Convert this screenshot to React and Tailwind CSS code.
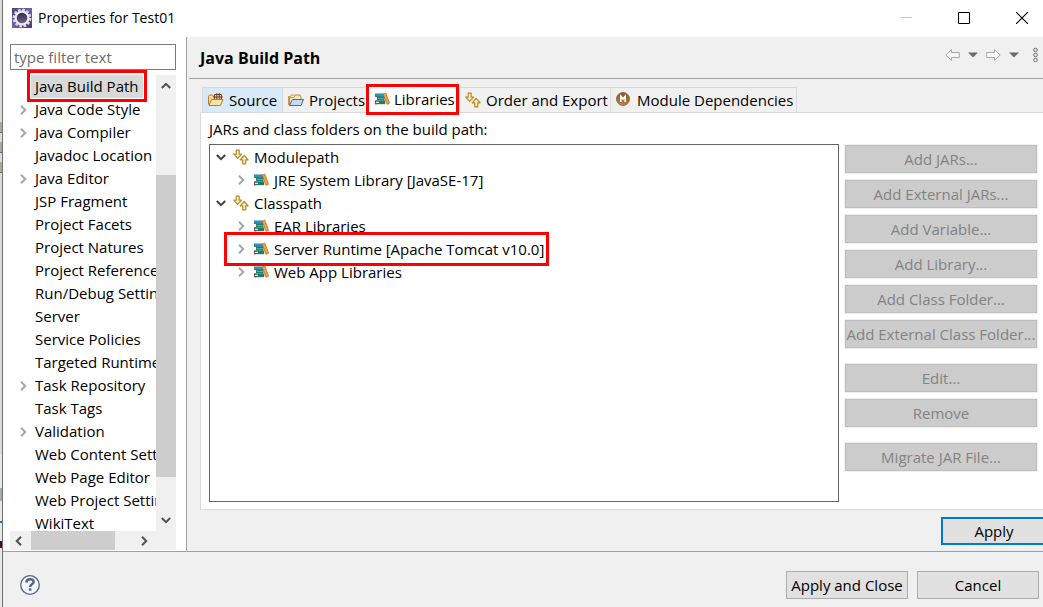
import React from "react";

const pages = [
  { label: "Java Build Path", selected: true },
  { label: "Java Code Style", children: true },
  { label: "Java Compiler", children: true },
  { label: "Javadoc Location" },
  { label: "Java Editor", children: true },
  { label: "JSP Fragment" },
  { label: "Project Facets" },
  { label: "Project Natures" },
  { label: "Project References" },
  { label: "Run/Debug Settings" },
  { label: "Server" },
  { label: "Service Policies" },
  { label: "Targeted Runtimes" },
  { label: "Task Repository", children: true },
  { label: "Task Tags" },
  { label: "Validation", children: true },
  { label: "Web Content Settings" },
  { label: "Web Page Editor" },
  { label: "Web Project Settings" },
  { label: "WikiText" },
];

const buildPath = [
  { label: "Modulepath", items: ["JRE System Library [JavaSE-17]"] },
  {
    label: "Classpath",
    items: [
      "EAR Libraries",
      "Server Runtime [Apache Tomcat v10.0]",
      "Web App Libraries",
    ],
  },
];

const actionGroups = [
  [
    "Add JARs...",
    "Add External JARs...",
    "Add Variable...",
    "Add Library...",
    "Add Class Folder...",
    "Add External Class Folder...",
  ],
  ["Edit...", "Remove"],
  ["Migrate JAR File..."],
];

const chevrons = {
  right: "M3 .8L7.2 5 3 9.2",
  left: "M7 .8L2.8 5 7 9.2",
  up: "M.8 7L5 2.8 9.2 7",
  down: "M.8 3L5 7.2 9.2 3",
};

const Chevron = ({ dir, className }) => (
  <svg
    className={className}
    viewBox="0 0 10 10"
    fill="none"
    stroke="currentColor"
    strokeWidth="2"
  >
    <path d={chevrons[dir]} />
  </svg>
);

const EclipseIcon = () => (
  <svg className="size-5 shrink-0" viewBox="0 0 20 20">
    <defs>
      <linearGradient id="eclipse-bg" x1="0" y1="0" x2="1" y2="1">
        <stop offset="0" stopColor="#51447c" />
        <stop offset="0.5" stopColor="#6f63a0" />
        <stop offset="1" stopColor="#473a78" />
      </linearGradient>
      <linearGradient id="eclipse-moon" x1="0" y1="0" x2="0" y2="1">
        <stop offset="0" stopColor="#2c2647" />
        <stop offset="1" stopColor="#6f6a8c" />
      </linearGradient>
    </defs>
    <path d="M0 0h20v20H0z" fill="url(#eclipse-bg)" />
    <circle
      cx="10"
      cy="10"
      r="8.2"
      fill="none"
      stroke="#dedbe4"
      strokeWidth="2.4"
      strokeDasharray="2.6 1.69"
    />
    <circle cx="10" cy="10" r="6.4" fill="url(#eclipse-moon)" stroke="#efedf2" strokeWidth="2.2" />
  </svg>
);

const SourceIcon = () => (
  <svg className="size-4 shrink-0" viewBox="0 0 16 16" strokeLinejoin="round">
    <path d="M.5 12.5V4.5l1-1.5h3l1 1.5h6V7" fill="#f5d996" stroke="#b37a2c" />
    <path d="M6.5 2.5h7v5h-7z" fill="#e9c9a0" stroke="#75462b" />
    <path d="M8.8 1v6.5M11.3 1v6.5M5 5h10" stroke="#75462b" fill="none" />
    <path d="M1 13.5l2.5-6h11.5l-2.5 6z" fill="#fbe3a5" stroke="#b97a24" />
  </svg>
);

const ProjectsIcon = () => (
  <svg className="size-4 shrink-0" viewBox="0 0 16 16" strokeLinejoin="round">
    <path d="M.5 13V4.5h2L3.5 3h3" fill="none" stroke="#c79744" />
    <path d="M1.5 13V5.5h4.5l1-2.5h5l1 2v3" fill="#fae8b8" stroke="#c18f3a" />
    <path d="M1.5 13.5l2.8-6h11.2l-2.5 6z" fill="#c3dbf7" stroke="#3c68b5" />
  </svg>
);

const LibraryIcon = () => (
  <svg className="size-4 shrink-0" viewBox="0 0 16 16">
    <path d="M1 2.5h9V6H1z" fill="#2583ad" />
    <path d="M2 3.6h7v.8H2z" fill="#4fa3c6" />
    <path d="M3 6h7.5v3.5H3z" fill="#208068" />
    <path d="M3.8 7h6.2v1H3.8z" fill="#52b394" />
    <path d="M1 9.5h10.2v3.7H1z" fill="#22776a" />
    <path d="M1 9.5h2v3.7H1z" fill="#8a4a31" />
    <path d="M2 10.8h3v1.2H2z" fill="#e4ebe3" />
    <path d="M9.3 3.2l2.5-1.2 3.8 10.3-2.6 1z" fill="#f2a444" stroke="#c06c24" strokeWidth=".8" />
  </svg>
);

const OrderIcon = () => (
  <svg
    className="size-4 shrink-0"
    viewBox="0 0 16 16"
    fill="#fdeeb8"
    stroke="#b98a2b"
    strokeWidth="1.2"
    strokeLinejoin="round"
  >
    <path d="M3.2 1.2h3v4h2.4L4.7 9.4.8 5.2h2.4z" />
    <path d="M9.7 14.8h3v-4h2.5l-4-4.3-4 4.3h2.5z" />
  </svg>
);

const ModuleIcon = () => (
  <svg className="size-4 shrink-0" viewBox="0 0 16 16">
    <defs>
      <linearGradient id="module-disc" x1="0" y1="0" x2="0" y2="1">
        <stop offset="0" stopColor="#7d5a33" />
        <stop offset="1" stopColor="#bd8347" />
      </linearGradient>
    </defs>
    <circle cx="7" cy="7" r="6.5" fill="url(#module-disc)" stroke="#8a5a2b" strokeWidth=".8" />
    <path d="M4.8 10V4.2l2.2 2.8 2.2-2.8V10" fill="none" stroke="#fff" strokeWidth="1.6" />
  </svg>
);

const HelpIcon = () => (
  <svg className="size-5" viewBox="0 0 20 20" fill="none" stroke="#526385">
    <circle cx="10" cy="10" r="9.3" fill="#f7f8fa" strokeWidth="1.3" />
    <path d="M6.4 7.4c0-4.2 7.2-4.2 7.2-.5 0 2.4-3.5 2.3-3.5 5" strokeWidth="2.4" />
    <path d="M10.1 13.3v2.5" strokeWidth="2.6" />
  </svg>
);

const tabs = [
  { label: "Source", icon: <SourceIcon />, style: "w-20 bg-[#d8e9f7]" },
  { label: "Projects", icon: <ProjectsIcon />, style: "w-[84px]" },
  { label: "Libraries", icon: <LibraryIcon />, active: true },
  { label: "Order and Export", icon: <OrderIcon />, style: "w-[151px]" },
  { label: "Module Dependencies", icon: <ModuleIcon />, style: "w-[187px] border-r" },
];

const TitleBar = () => (
  <header className="flex h-[37px] shrink-0 items-center bg-white pb-[1px] pl-[9px]">
    <EclipseIcon />
    <h1 className="ml-[6px] flex-1 text-sm">Properties for Test01</h1>
    <div className="flex items-center gap-[46px] pr-[15px]">
      <button aria-label="Minimize">
        <svg className="size-3" viewBox="0 0 12 12" stroke="#c8c8c8">
          <path d="M0 5.5h12" />
        </svg>
      </button>
      <button aria-label="Maximize">
        <svg className="size-3" viewBox="0 0 12 12" fill="none" stroke="#000">
          <path d="M.5.5h11v11H.5z" />
        </svg>
      </button>
      <button aria-label="Close">
        <svg className="size-3" viewBox="0 0 12 12" stroke="#000" strokeWidth="1.1">
          <path d="M0 0l12 12M12 0L0 12" />
        </svg>
      </button>
    </div>
  </header>
);

const Sidebar = () => (
  <nav className="flex w-[184px] shrink-0 flex-col border-r border-[#a0a0a0] bg-white pt-[7px] pr-[10px] pb-[1px] pl-[7px]">
    <input
      type="text"
      aria-label="Filter pages"
      placeholder="type filter text"
      className="h-[26px] w-full shrink-0 border border-[#7a7a7a] px-[3px] placeholder:text-[#6d6d6d]"
    />
    <div className="relative mt-[5px] flex min-h-0 flex-1">
      <ul className="min-w-0 flex-1 overflow-hidden">
        {pages.map((page) => (
          <li key={page.label} className="flex h-[23px] items-center pl-[8px]">
            <span className="flex w-[13px] shrink-0 items-center text-[#a6a6a6]">
              {page.children && (
                <button aria-label={`Expand ${page.label}`}>
                  <Chevron dir="right" className="size-[10px]" />
                </button>
              )}
            </span>
            <a
              href="#"
              className={`px-1 leading-[23px] whitespace-nowrap ${page.selected ? "bg-[#d9d9d9]" : ""}`}
            >
              {page.label}
            </a>
          </li>
        ))}
      </ul>
      <div className="flex w-5 shrink-0 flex-col items-center bg-[#f0f0f0] py-[6px] text-[#505050]">
        <button aria-label="Scroll up">
          <Chevron dir="up" className="size-[10px]" />
        </button>
        <div className="flex w-full flex-1 flex-col pt-[84px] pb-[38px]">
          <div className="w-full flex-1 bg-[#cdcdcd]" />
        </div>
        <button aria-label="Scroll down">
          <Chevron dir="down" className="size-[10px]" />
        </button>
      </div>
      <div className="pointer-events-none absolute -top-[5px] left-[17px] h-8 w-[120px] border-3 border-[#ff0000]" />
    </div>
    <div className="flex h-[19px] shrink-0 items-center bg-[#f0f0f0] pr-[27px] pl-[4px] text-[#505050]">
      <button aria-label="Scroll left">
        <Chevron dir="left" className="size-[10px]" />
      </button>
      <div className="mr-[24px] ml-[7px] h-full flex-1 bg-[#cdcdcd]" />
      <button aria-label="Scroll right">
        <Chevron dir="right" className="size-[10px]" />
      </button>
    </div>
  </nav>
);

const HistoryArrow = ({ flip }) => (
  <svg
    className={`h-3 w-[15px] ${flip ? "-scale-x-100" : ""}`}
    viewBox="0 0 15 12"
    fill="#f8f8f8"
    stroke="#a9a9a9"
    strokeLinejoin="round"
  >
    <path d="M.8 6L6.5.6v2.9h7.8v5H6.5v2.9z" />
  </svg>
);

const Caret = () => (
  <svg className="h-[6px] w-[10px]" viewBox="0 0 10 6" fill="#6b6b70">
    <path d="M0 .5h10l-5 5z" />
  </svg>
);

const PageHeader = () => (
  <div className="ml-[2px] flex h-[42px] shrink-0 items-center border-b border-[#a0a0a0] pl-[11px]">
    <h2 className="flex-1 text-base font-bold">Java Build Path</h2>
    <div className="flex items-center gap-2 pr-[5px] pb-[6px]">
      <button aria-label="Back">
        <HistoryArrow />
      </button>
      <button aria-label="Back history">
        <Caret />
      </button>
      <button aria-label="Forward">
        <HistoryArrow flip />
      </button>
      <button aria-label="Forward history">
        <Caret />
      </button>
      <button aria-label="View menu" className="ml-[6px]">
        <svg className="h-4 w-[5px]" viewBox="0 0 5 16" fill="none" stroke="#6b6b6b">
          <circle cx="2.5" cy="3" r="1.8" />
          <circle cx="2.5" cy="8" r="1.8" />
          <circle cx="2.5" cy="13" r="1.8" />
        </svg>
      </button>
    </div>
  </div>
);

const Tabs = () => (
  <div role="tablist" className="flex h-[33px] shrink-0 items-end pl-[2px]">
    {tabs.map(({ label, icon, active, style }) =>
      active ? (
        <button
          key={label}
          role="tab"
          aria-selected="true"
          className="relative z-10 -mb-[3px] flex h-[31px] w-[93px] items-center gap-1 border-3 border-[#ff0000] bg-white pb-[2px] pl-[5px] whitespace-nowrap"
        >
          {icon}
          {label}
        </button>
      ) : (
        <button
          key={label}
          role="tab"
          aria-selected="false"
          className={`flex h-[25px] items-center gap-[5px] border-t border-l border-[#d9d9d9] pl-[5px] whitespace-nowrap ${style}`}
        >
          {icon}
          {label}
        </button>
      )
    )}
  </div>
);

const LibraryTree = () => (
  <ul className="min-w-0 flex-1 border border-[#646464] bg-white">
    {buildPath.map((node) => (
      <li key={node.label}>
        <div className="flex h-[23px] items-center pl-[6px]">
          <button aria-label={`Collapse ${node.label}`} className="mr-[7px] text-[#404040]">
            <Chevron dir="down" className="size-[10px]" />
          </button>
          <OrderIcon />
          <span className="ml-[5px] leading-[22px]">{node.label}</span>
        </div>
        <ul>
          {node.items.map((item) => (
            <li key={item} className="relative flex h-[23px] items-center pl-[26px]">
              <button aria-label={`Expand ${item}`} className="mr-[7px] text-[#a6a6a6]">
                <Chevron dir="right" className="size-[10px]" />
              </button>
              <LibraryIcon />
              <span className="ml-[5px] leading-[22px] whitespace-nowrap">{item}</span>
              {item.startsWith("Server Runtime") && (
                <div className="pointer-events-none absolute -top-[5px] left-[14px] z-10 h-[34px] w-[325px] border-3 border-[#ff0000]" />
              )}
            </li>
          ))}
        </ul>
      </li>
    ))}
  </ul>
);

const Actions = () => (
  <div className="flex w-[192px] shrink-0 flex-col gap-4 pt-[1px]">
    {actionGroups.map((group) => (
      <div key={group[0]} className="flex flex-col gap-[7px]">
        {group.map((label) => (
          <button
            key={label}
            disabled
            className="h-7 w-full border border-[#bfbfbf] bg-[#cccccc] whitespace-nowrap text-[#838383] ring-1 ring-[#f0f0f0]"
          >
            <span className="flex justify-center">{label}</span>
          </button>
        ))}
      </div>
    ))}
  </div>
);

const BuildPathPage = () => (
  <main className="flex min-w-0 flex-1 flex-col overflow-hidden">
    <PageHeader />
    <div className="flex min-h-0 flex-1 flex-col pb-[6px] pl-[13px]">
      <Tabs />
      <section className="flex min-h-0 flex-1 flex-col border-y border-l border-[#d9d9d9] bg-white pt-[5px] pr-[6px] pb-[7px] pl-2">
        <h3 className="mb-[2px] h-6 leading-[23px]">JARs and class folders on the build path:</h3>
        <div className="flex min-h-0 flex-1 gap-[6px]">
          <LibraryTree />
          <Actions />
        </div>
      </section>
      <div className="flex shrink-0 justify-end pt-[7px]">
        <button className="-mr-1 h-7 w-[106px] border-2 border-[#0078d7] bg-[#e1e1e1]">Apply</button>
      </div>
    </div>
  </main>
);

const Footer = () => (
  <footer className="flex h-14 shrink-0 items-center border-t border-[#a0a0a0] pt-3 pr-1 pb-[1px] pl-[17px]">
    <button aria-label="Help">
      <HelpIcon />
    </button>
    <div className="ml-auto flex gap-[9px]">
      <button className="h-7 w-[122px] border border-[#adadad] bg-[#e1e1e1] whitespace-nowrap">
        Apply and Close
      </button>
      <button className="h-7 w-[122px] border border-[#adadad] bg-[#e1e1e1]">Cancel</button>
    </div>
  </footer>
);

// Sliver of the editor window that shows past the dialog's left edge
const EditorEdge = () => (
  <svg className="w-[2px] shrink-0 bg-[#dcdcdc]" viewBox="0 0 2 607" preserveAspectRatio="xMinYMin slice">
    <path d="M0 455h2v152H0z" fill="#e8e8e8" />
    <path d="M0 122h2v10H0zM0 142h2v10H0zM0 162h2v10H0z" fill="#b7a58e" />
    <path d="M0 132h2v1H0zM0 152h2v1H0zM0 172h2v1H0z" fill="#666" />
    <path d="M0 488h2v13H0z" fill="#9eabc0" />
    <path d="M0 521h2v2H0z" fill="#1474c4" />
    <path d="M0 541h2v7H0z" fill="#4b0a4b" />
  </svg>
);

export default function App() {
  return (
    <div className="flex h-screen w-full overflow-hidden bg-[#f0f0f0] font-['Open_Sans','Noto_Sans',sans-serif] text-[15px] leading-5 text-black">
      <EditorEdge />
      <div className="flex min-w-0 flex-1 flex-col border-l border-[#707070]">
        <TitleBar />
        <div className="flex min-h-0 flex-1">
          <Sidebar />
          <BuildPathPage />
        </div>
        <Footer />
      </div>
    </div>
  );
}
